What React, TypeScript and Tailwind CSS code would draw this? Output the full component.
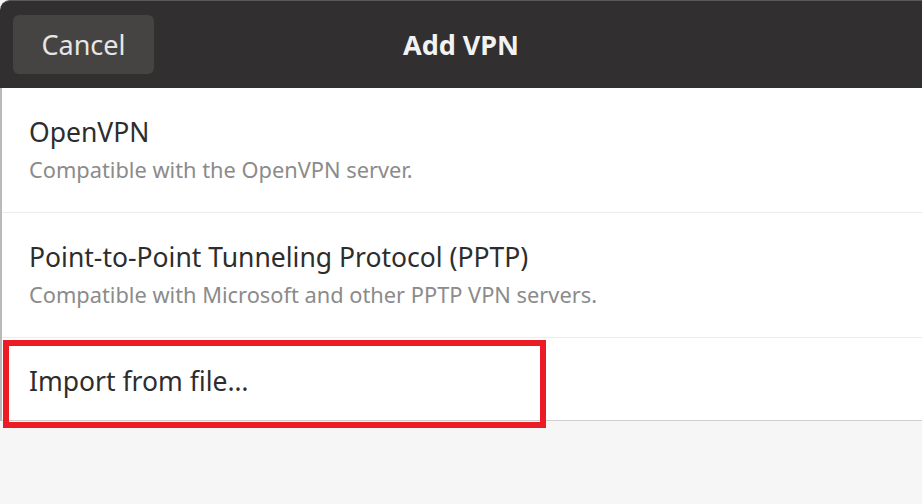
const ROWS = [
  { title: 'OpenVPN', desc: 'Compatible with the OpenVPN server.' },
  { title: 'Point-to-Point Tunneling Protocol (PPTP)', desc: 'Compatible with Microsoft and other PPTP VPN servers.' },
]

export default function App() {
  return (
    <div
      className="w-[922px] h-[504px] overflow-hidden bg-[#f6f6f6] flex flex-col"
      style={{ fontFamily: '"Noto Sans", "Open Sans", sans-serif' }}
    >
      {/* header bar */}
      <header className="relative h-[88px] shrink-0 bg-[#312f2f] rounded-tl-[10px] border-t border-[#5a5858] flex items-center px-[13px]">
        <button className="w-[141px] h-[59px] rounded-[6px] bg-[#464443] text-[#e6e6e6] text-[27px] leading-none">
          Cancel
        </button>
        <h1 className="absolute left-1/2 top-1/2 -translate-x-1/2 -translate-y-1/2 text-[27px] font-bold text-[#f2f2f2]">
          Add VPN
        </h1>
      </header>

      {/* list */}
      <div className="bg-white border-l-2 border-[#b9b9b9] border-b border-b-[#cfcfcf]">
        {ROWS.map((r) => (
          <div key={r.title} className="h-[125px] border-b border-[#ececec] pl-[27px] flex flex-col justify-center">
            <div className="text-[26.5px] text-[#2d2d2d] leading-[30px]">{r.title}</div>
            <div className="text-[21.8px] text-[#8b8b8b] leading-[26px] mt-[10px]">{r.desc}</div>
          </div>
        ))}
        <div className="relative h-[82px] pl-[27px] pt-[4px] flex items-center">
          <div className="text-[26.5px] text-[#2d2d2d] leading-[30px]">Import from file…</div>
          {/* highlight box */}
          <div className="absolute left-[1px] top-[2px] w-[543px] h-[88px] border-[6px] border-[#ec1c24]" />
        </div>
      </div>
    </div>
  )
}
